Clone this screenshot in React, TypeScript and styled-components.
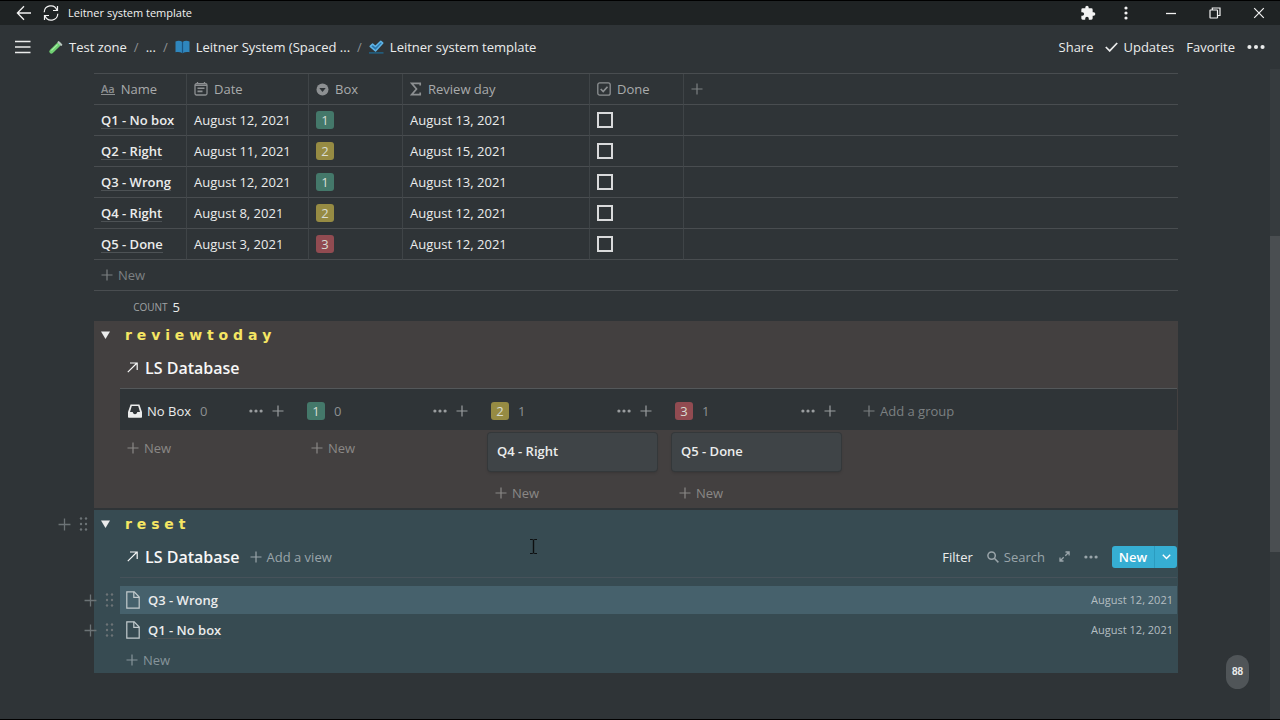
import React from "react";
import styled, { createGlobalStyle, css } from "styled-components";

const GlobalStyle = createGlobalStyle`
  *, *::before, *::after { box-sizing: border-box; }
  body {
    margin: 0;
    background: #2f3437;
    color: #ebecec;
    font-family: "Open Sans", "Noto Sans", sans-serif;
    font-size: 13px;
    line-height: 20px;
  }
  button {
    margin: 0;
    padding: 0;
    border: 0;
    background: none;
    color: inherit;
    font: inherit;
    cursor: pointer;
  }
  a { color: inherit; text-decoration: none; }
  svg { display: block; flex: none; }
`;

type Tone = "green" | "yellow" | "red";
const tones: Record<Tone, string> = {
  green: "#44786a",
  yellow: "#968b43",
  red: "#914b51",
};
const muted = "#8d9092";
const line = "#494d50";

/* ---------- Icons ---------- */

const PlusIcon = ({ size = 12 }: { size?: number }) => (
  <svg width={size} height={size} viewBox="0 0 12 12" fill="none" stroke="currentColor" strokeWidth="1.2">
    <path d="M6 0.5v11M0.5 6h11" />
  </svg>
);

const DotsIcon = ({ size = 14 }: { size?: number }) => (
  <svg width={size} height={size} viewBox="0 0 14 14" fill="currentColor">
    <circle cx="1.9" cy="7" r="1.6" />
    <circle cx="7" cy="7" r="1.6" />
    <circle cx="12.1" cy="7" r="1.6" />
  </svg>
);

const BackIcon = () => (
  <svg width="16" height="16" viewBox="0 0 16 16" fill="none" stroke="currentColor" strokeWidth="1.3">
    <path d="M15 8H1.5M8 1.2 1.4 8 8 14.8" />
  </svg>
);

const ReloadIcon = () => (
  <svg width="16" height="16" viewBox="0 0 16 16" fill="none" stroke="currentColor" strokeWidth="1.2">
    <path d="M1.2 7.2A6.6 6.6 0 0 1 14 5.2M14.8 8.8A6.6 6.6 0 0 1 2 10.8" />
    <path d="M14.5 1v4.5H10M1.5 15v-4.5H6" />
  </svg>
);

const PuzzleIcon = () => (
  <svg width="16" height="16" viewBox="0 0 24 24" fill="currentColor">
    <path d="M20.5 11H19V7a2 2 0 0 0-2-2h-4V3.5a2.5 2.5 0 0 0-5 0V5H4a2 2 0 0 0-2 2v3.8h1.5a2.7 2.7 0 0 1 0 5.4H2V20a2 2 0 0 0 2 2h3.8v-1.5a2.7 2.7 0 0 1 5.4 0V22H17a2 2 0 0 0 2-2v-4h1.5a2.5 2.5 0 0 0 0-5z" />
  </svg>
);

const KebabIcon = () => (
  <svg width="14" height="14" viewBox="0 0 14 14" fill="currentColor">
    <circle cx="7" cy="2" r="1.6" />
    <circle cx="7" cy="7" r="1.6" />
    <circle cx="7" cy="12" r="1.6" />
  </svg>
);

const MinimizeIcon = () => (
  <svg width="12" height="12" viewBox="0 0 12 12" stroke="currentColor" strokeWidth="1.3">
    <path d="M1 6.5h10" />
  </svg>
);

const RestoreIcon = () => (
  <svg width="12" height="12" viewBox="0 0 12 12" fill="none" stroke="currentColor" strokeWidth="1.2">
    <rect x="1" y="3" width="7.5" height="8" rx="0.5" />
    <path d="M3.3 3V1H11v7.5H8.5" />
  </svg>
);

const CloseIcon = () => (
  <svg width="12" height="12" viewBox="0 0 12 12" stroke="currentColor" strokeWidth="1.2">
    <path d="M1.2 1.2l9.6 9.6M10.8 1.2l-9.6 9.6" />
  </svg>
);

const MenuIcon = () => (
  <svg width="16" height="14" viewBox="0 0 16 14" stroke="currentColor" strokeWidth="1.3">
    <path d="M0 1.5h15.5M0 7h15.5M0 12.5h15.5" />
  </svg>
);

const TestTubeIcon = () => (
  <svg width="15" height="15" viewBox="0 0 15 15" strokeLinecap="round">
    <path d="M3.4 11.6l7.4-7.4" stroke="#6fcf72" strokeWidth="4.2" />
    <path d="M3.8 10.2l5.4-5.4" stroke="#a6eda4" strokeWidth="1.2" />
    <path d="M10.6 2.2l2.6 2.6" stroke="#b9c6c0" strokeWidth="2.2" />
  </svg>
);

const BookIcon = () => (
  <svg width="15" height="14" viewBox="0 0 15 14">
    <path d="M0.5 1.5C3 0.3 5.4 0.7 7.5 2c2.1-1.3 4.5-1.7 7-0.5v10.8c-2.4-.6-4.8-.4-7 1-2.2-1.4-4.6-1.6-7-1z" fill="#2f86bd" />
    <path d="M7.5 2v11" stroke="#1b5480" strokeWidth="1.2" />
  </svg>
);

const TickPageIcon = () => (
  <svg width="15" height="14" viewBox="0 0 15 14" fill="none">
    <path d="M1.2 6.4l2.4-2.3 2.8 2.4 5.4-5.2 2 1.8-7.3 7.8z" stroke="#5fb4e6" strokeWidth="1.5" fill="#2b77ad" strokeLinejoin="round" />
    <path d="M0 12.9h14.5" stroke="#1e6d99" strokeWidth="1.2" />
  </svg>
);

const CheckIcon = () => (
  <svg width="13" height="10" viewBox="0 0 13 10" fill="none" stroke="currentColor" strokeWidth="1.7">
    <path d="M0.8 5l3.9 3.9L12.2 1" />
  </svg>
);

const CalendarIcon = () => (
  <svg width="14" height="14" viewBox="0 0 14 14" fill="none" stroke="currentColor" strokeWidth="1.3">
    <rect x="1" y="1.7" width="12" height="11.3" rx="1.5" />
    <path d="M1 3.3h12M3.5 6.2h7M3.5 9.4h5" strokeWidth="1.6" />
    <path d="M3.5 0v2M10.5 0v2" />
  </svg>
);

const SelectIcon = () => (
  <svg width="13" height="13" viewBox="0 0 13 13">
    <circle cx="6.5" cy="6.5" r="6" fill="currentColor" />
    <path d="M3.3 5h6.4L6.5 9z" fill="#2f3437" />
  </svg>
);

const SigmaIcon = () => (
  <svg width="12" height="14" viewBox="0 0 12 14" fill="none" stroke="currentColor" strokeWidth="1.7">
    <path d="M10.2 3.6V1.3H1.6L6.5 7l-4.9 5.7h8.6v-2.3" />
  </svg>
);

const CheckboxIcon = () => (
  <svg width="14" height="14" viewBox="0 0 14 14" fill="none" stroke="currentColor">
    <rect x="0.8" y="0.8" width="12.4" height="12.4" rx="2" strokeWidth="1.3" />
    <path d="M3.7 7l2.5 2.5 4.3-4.7" strokeWidth="1.7" />
  </svg>
);

const ToggleIcon = () => (
  <svg width="9" height="8" viewBox="0 0 9 8" fill="currentColor">
    <path d="M0 0.5h9L4.5 8z" />
  </svg>
);

const ArrowOutIcon = () => (
  <svg width="11" height="11" viewBox="0 0 11 11" fill="none" stroke="currentColor" strokeWidth="1.2">
    <path d="M0.8 10.2L10 1M3 1h7.2v7" />
  </svg>
);

const InboxIcon = () => (
  <svg width="14" height="14" viewBox="0 0 14 14" fill="currentColor">
    <path fillRule="evenodd" d="M2.6 0.5h8.8L14 8v5a.8.8 0 0 1-.8.8H.8A.8.8 0 0 1 0 13V8zM3.8 2.1L2 8h2.8c0 1.3 1 2.2 2.2 2.2S9.2 9.3 9.2 8H12L10.2 2.1z" />
  </svg>
);

const SearchIcon = () => (
  <svg width="12" height="12" viewBox="0 0 12 12" fill="none" stroke="currentColor" strokeWidth="1.5">
    <circle cx="4.6" cy="4.6" r="3.7" />
    <path d="M7.3 7.3l4.1 4.1" />
  </svg>
);

const ExpandIcon = () => (
  <svg width="11" height="11" viewBox="0 0 11 11" fill="none" stroke="currentColor" strokeWidth="1.3">
    <path d="M6.5 1h3.6v3.6M10 1L6.3 4.7M4.5 10H1V6.4M1 10l3.7-3.7" />
  </svg>
);

const ChevronIcon = () => (
  <svg width="9" height="6" viewBox="0 0 9 6" fill="none" stroke="currentColor" strokeWidth="1.4">
    <path d="M0.8 0.8l3.7 3.8L8.2 0.8" />
  </svg>
);

const PageIcon = () => (
  <svg width="14" height="18" viewBox="0 0 14 18" fill="none" stroke="currentColor" strokeWidth="1.2">
    <path d="M0.8 0.8h7.4l5 5.2v11.2H0.8z" />
    <path d="M7.8 0.8v5.6h5.4" />
  </svg>
);

const GripIcon = () => (
  <svg width="9" height="14" viewBox="0 0 9 14" fill="currentColor">
    {[1.5, 7, 12.5].map((y) => (
      <React.Fragment key={y}>
        <circle cx="2" cy={y} r="1.2" />
        <circle cx="7" cy={y} r="1.2" />
      </React.Fragment>
    ))}
  </svg>
);

const BeamIcon = () => (
  <svg width="9" height="17" viewBox="0 0 9 17" fill="none" stroke="#0d0f10">
    <path d="M4.5 1.5v14" strokeWidth="1.4" />
    <path d="M1 1.5h2.8M5.200 1.500H8M1 15.500h2.800M5.200 15.500H8" strokeWidth="1.2" />
  </svg>
);

/* ---------- Frame ---------- */

const Shell = styled.div`
  display: flex;
  flex-direction: column;
  min-height: 100vh;
  position: relative;
  border-top: 1px solid #000;
  border-bottom: 1px solid #000;
`;

const TitleBar = styled.header`
  display: flex;
  align-items: center;
  height: 24px;
  padding: 0 15px 0 16px;
  gap: 11px;
  background: #1f2324;
  color: #f2f2f2;
  font-size: 11px;
`;

const WindowTitle = styled.span`
  flex: 1;
  margin-left: -2px;
`;

const WindowControls = styled.div`
  display: flex;
  align-items: center;
  gap: 32px;
`;

const AppControls = styled.div`
  display: flex;
  align-items: center;
  gap: 23px;
`;

const IconButton = styled.button<{ $color?: string }>`
  display: flex;
  align-items: center;
  justify-content: center;
  color: ${(p) => p.$color ?? "inherit"};
`;

const PageBar = styled.nav`
  display: flex;
  align-items: center;
  justify-content: space-between;
  height: 44px;
  padding: 0 15px;
  gap: 17px;
`;

const Crumbs = styled.div`
  display: flex;
  flex: 1;
  align-items: center;
  gap: 7px;
`;

const Crumb = styled.a`
  display: flex;
  align-items: center;
  gap: 6px;
`;

const Slash = styled.span`
  color: ${muted};
`;

const PageActions = styled.div`
  display: flex;
  align-items: center;
  gap: 12px;
`;

const ActionButton = styled.button`
  display: flex;
  align-items: center;
  gap: 5px;
`;

const Body = styled.div`
  display: flex;
  flex: 1;
`;

const Main = styled.main`
  flex: 1;
  min-width: 0;
  padding: 4px 92px 40px 94px;
`;

const ScrollTrack = styled.div`
  display: flex;
  flex-direction: column;
  width: 10px;
  background: #363b3e;
`;

const ScrollSpace = styled.div`
  flex: 168;
`;

const ScrollThumb = styled.div`
  flex: 316;
  background: #4a4e51;
`;

/* ---------- Table ---------- */

const Table = styled.table`
  width: 100%;
  table-layout: fixed;
  border-spacing: 0;
  border-top: 1px solid ${line};
`;

const Col = styled.col<{ $w?: number }>`
  width: ${(p) => (p.$w ? `${p.$w}px` : "auto")};
`;

const cell = css`
  height: 31px;
  padding: 0 7px;
  border-bottom: 1px solid ${line};
  border-right: 1px solid #3f4447;
  text-align: left;
  white-space: nowrap;
  &:last-child { border-right: 0; }
`;

const HeadCell = styled.th`
  ${cell}
  color: #a9abac;
  font-weight: 400;
`;

const Cell = styled.td`
  ${cell}
`;

const HeadLabel = styled.span`
  display: flex;
  align-items: center;
  gap: 6px;
  svg { color: ${muted}; }
`;

const AaMark = styled.span`
  color: ${muted};
  font-size: 11px;
  line-height: 11px;
  font-weight: 600;
  border-bottom: 1px solid ${muted};
`;

const PageLink = styled.a<{ $plain?: boolean }>`
  display: inline-block;
  line-height: 16px;
  font-weight: 600;
  border-bottom: 1px solid ${(p) => (p.$plain ? "transparent" : "#4d5255")};
`;

const Tag = styled.span<{ $tone: Tone }>`
  display: block;
  width: 18px;
  height: 18px;
  border-radius: 3px;
  background: ${(p) => tones[p.$tone]};
  color: #d8dcd4;
  line-height: 18px;
  text-align: center;
`;

const Tick = styled.input`
  appearance: none;
  display: block;
  width: 16px;
  height: 16px;
  margin: 0;
  border: 2px solid #d9dadb;
`;

const NewButton = styled.button<{ $color?: string }>`
  display: flex;
  align-items: center;
  gap: 5px;
  color: ${(p) => p.$color ?? "#7c8082"};
`;

const TableFoot = styled.div`
  display: flex;
  align-items: center;
  height: 31px;
  padding: 0 7px;
  border-bottom: 1px solid ${line};
`;

const CountRow = styled.div`
  display: flex;
  align-items: center;
  justify-content: flex-end;
  gap: 5px;
  width: 93px;
  height: 30px;
  padding: 2px 7px 0 0;
`;

const CountLabel = styled.span`
  color: #a0a3a4;
  font-size: 10px;
`;

/* ---------- Toggle sections ---------- */

const Section = styled.section<{ $bg: string }>`
  position: relative;
  padding: 2px 1px 0 26px;
  background: ${(p) => p.$bg};
  & + & { margin-top: 2px; }
`;

const ToggleRow = styled.button`
  display: flex;
  align-items: center;
  gap: 15px;
  height: 24px;
  margin-left: -19px;
`;

const ToggleText = styled.span`
  color: #f5e663;
  font-family: "DejaVu Sans", sans-serif;
  font-size: 14px;
  font-weight: 700;
`;

const ViewBar = styled.div`
  display: flex;
  align-items: center;
  justify-content: space-between;
  height: 41px;
`;

const ViewGroup = styled.div`
  display: flex;
  align-items: center;
  gap: 10px;
`;

const ViewTitle = styled.a`
  display: flex;
  align-items: center;
  gap: 7px;
  padding-left: 7px;
  color: #f7f7f7;
  font-size: 16px;
  font-weight: 600;
`;

const BoardHead = styled.div`
  display: flex;
  align-items: center;
  gap: 14px;
  height: 42px;
  padding-top: 3px;
  border-top: 1px solid #54585a;
  background: #2f3437;
`;

const Group = styled.div<{ $inset: number }>`
  display: flex;
  align-items: center;
  width: 170px;
  padding: 0 6px 0 ${(p) => p.$inset}px;
  gap: 9px;
`;

const GroupName = styled.span`
  display: flex;
  align-items: center;
  gap: 5px;
`;

const GroupCount = styled.span`
  flex: 1;
  color: ${muted};
`;

const BoardBody = styled.div`
  display: flex;
  align-items: flex-start;
  gap: 14px;
  padding-top: 3px;
`;

const Lane = styled.div`
  display: flex;
  flex-direction: column;
  align-items: flex-start;
  width: 170px;
  gap: 7px;
`;

const Card = styled.a`
  width: 169px;
  height: 38px;
  padding: 0 9px;
  border-radius: 3px;
  background: #3f4447;
  box-shadow: 0 0 0 1px #34383a, 0 2px 3px rgba(15, 15, 15, 0.2);
  font-weight: 600;
  line-height: 36px;
`;

const LaneNew = styled(NewButton)`
  height: 30px;
  padding-left: 7px;
`;

const Tools = styled.div`
  display: flex;
  align-items: center;
  gap: 14px;
  color: #9aa5aa;
`;

const ToolButton = styled.button<{ $strong?: boolean }>`
  display: flex;
  align-items: center;
  gap: 5px;
  ${(p) => p.$strong && css`color: #eceded;`}
`;

const SplitButton = styled.div`
  display: flex;
  height: 22px;
  border-radius: 3px;
  overflow: hidden;
  background: #36aed3;
  color: #fff;
`;

const SplitMain = styled.button`
  width: 43px;
  border-right: 1px solid #2b9cc0;
  font-weight: 600;
`;

const SplitMore = styled(IconButton)`
  width: 22px;
`;

const List = styled.div`
  display: flex;
  flex-direction: column;
  gap: 2px;
  padding-top: 8px;
  border-top: 1px solid #46525a;
`;

const ListRow = styled.div<{ $active?: boolean }>`
  position: relative;
  display: flex;
  align-items: center;
  gap: 8px;
  height: 28px;
  padding: 0 4px 0 6px;
  background: ${(p) => (p.$active ? "#46616c" : "transparent")};
  svg { color: #c3cbce; }
`;

const RowDate = styled.time`
  margin-left: auto;
  color: #b4bec2;
  font-size: 11px;
`;

const Gutter = styled.div`
  position: absolute;
  top: 0;
  right: 100%;
  display: flex;
  align-items: center;
  gap: 8px;
  height: 28px;
  padding-right: 6px;
  svg { color: #6c7376; }
`;

const ListFoot = styled.div`
  display: flex;
  align-items: center;
  height: 27px;
  padding: 0 6px;
`;

const HelpBadge = styled.button`
  position: absolute;
  right: 31px;
  bottom: 30px;
  width: 23px;
  height: 34px;
  border-radius: 12px;
  background: #505558;
  font-family: "Liberation Sans", sans-serif;
  font-size: 10px;
  font-weight: 700;
`;

const Pointer = styled.div`
  position: absolute;
  left: 529px;
  top: 537px;
  pointer-events: none;
`;

/* ---------- Data ---------- */

type Item = { name: string; date: string; box: number; tone: Tone; review: string };

const items: Item[] = [
  { name: "Q1 - No box", date: "August 12, 2021", box: 1, tone: "green", review: "August 13, 2021" },
  { name: "Q2 - Right", date: "August 11, 2021", box: 2, tone: "yellow", review: "August 15, 2021" },
  { name: "Q3 - Wrong", date: "August 12, 2021", box: 1, tone: "green", review: "August 13, 2021" },
  { name: "Q4 - Right", date: "August 8, 2021", box: 2, tone: "yellow", review: "August 12, 2021" },
  { name: "Q5 - Done", date: "August 3, 2021", box: 3, tone: "red", review: "August 12, 2021" },
];

const groups: { box?: number; tone?: Tone; cards: string[] }[] = [
  { cards: [] },
  { box: 1, tone: "green", cards: [] },
  { box: 2, tone: "yellow", cards: ["Q4 - Right"] },
  { box: 3, tone: "red", cards: ["Q5 - Done"] },
];

const resetRows = [
  { name: "Q3 - Wrong", date: "August 12, 2021", active: true },
  { name: "Q1 - No box", date: "August 12, 2021", active: false },
];

const Handles = () => (
  <Gutter>
    <IconButton aria-label="Add block"><PlusIcon size={13} /></IconButton>
    <IconButton aria-label="Drag block"><GripIcon /></IconButton>
  </Gutter>
);

const Database = () => (
  <>
    <Table>
      <colgroup>
        <Col $w={93} />
        <Col $w={122} />
        <Col $w={94} />
        <Col $w={187} />
        <Col $w={94} />
        <Col />
      </colgroup>
      <thead>
        <tr>
          <HeadCell><HeadLabel><AaMark>Aa</AaMark>Name</HeadLabel></HeadCell>
          <HeadCell><HeadLabel><CalendarIcon />Date</HeadLabel></HeadCell>
          <HeadCell><HeadLabel><SelectIcon />Box</HeadLabel></HeadCell>
          <HeadCell><HeadLabel><SigmaIcon />Review day</HeadLabel></HeadCell>
          <HeadCell><HeadLabel><CheckboxIcon />Done</HeadLabel></HeadCell>
          <HeadCell><IconButton aria-label="Add property" $color="#7c8082"><PlusIcon /></IconButton></HeadCell>
        </tr>
      </thead>
      <tbody>
        {items.map((item) => (
          <tr key={item.name}>
            <Cell><PageLink href="#">{item.name}</PageLink></Cell>
            <Cell>{item.date}</Cell>
            <Cell><Tag $tone={item.tone}>{item.box}</Tag></Cell>
            <Cell>{item.review}</Cell>
            <Cell><Tick type="checkbox" aria-label={`${item.name} done`} /></Cell>
            <Cell />
          </tr>
        ))}
      </tbody>
    </Table>
    <TableFoot><NewButton><PlusIcon />New</NewButton></TableFoot>
    <CountRow><CountLabel>COUNT</CountLabel>5</CountRow>
  </>
);

const ReviewToday = () => (
  <Section $bg="#434040">
    <ToggleRow><ToggleIcon /><ToggleText>r e v i e w t o d a y</ToggleText></ToggleRow>
    <ViewBar><ViewTitle href="#"><ArrowOutIcon />LS Database</ViewTitle></ViewBar>
    <div>
      <BoardHead>
        {groups.map((g, i) => (
          <Group key={i} $inset={g.tone ? 3 : 8}>
            {g.tone ? <Tag $tone={g.tone}>{g.box}</Tag> : <GroupName><InboxIcon />No Box</GroupName>}
            <GroupCount>{g.cards.length}</GroupCount>
            <IconButton aria-label="Group options" $color="#9a9d9f"><DotsIcon /></IconButton>
            <IconButton aria-label="Add card" $color="#9a9d9f"><PlusIcon /></IconButton>
          </Group>
        ))}
        <LaneNew><PlusIcon />Add a group</LaneNew>
      </BoardHead>
      <BoardBody>
        {groups.map((g, i) => (
          <Lane key={i}>
            {g.cards.map((c) => <Card key={c} href="#">{c}</Card>)}
            <LaneNew $color="#8a8886"><PlusIcon />New</LaneNew>
          </Lane>
        ))}
      </BoardBody>
    </div>
  </Section>
);

const Reset = () => (
  <Section $bg="#374b52">
    <Handles />
    <ToggleRow><ToggleIcon /><ToggleText>r e s e t</ToggleText></ToggleRow>
    <ViewBar>
      <ViewGroup>
        <ViewTitle href="#"><ArrowOutIcon />LS Database</ViewTitle>
        <NewButton $color="#9aa5aa"><PlusIcon />Add a view</NewButton>
      </ViewGroup>
      <Tools>
        <ToolButton $strong>Filter</ToolButton>
        <ToolButton><SearchIcon />Search</ToolButton>
        <ToolButton aria-label="Open full page"><ExpandIcon /></ToolButton>
        <ToolButton aria-label="View options"><DotsIcon /></ToolButton>
        <SplitButton>
          <SplitMain>New</SplitMain>
          <SplitMore aria-label="New options"><ChevronIcon /></SplitMore>
        </SplitButton>
      </Tools>
    </ViewBar>
    <List>
      {resetRows.map((r) => (
        <ListRow key={r.name} $active={r.active}>
          <Handles />
          <PageIcon />
          <PageLink href="#" $plain={r.active}>{r.name}</PageLink>
          <RowDate>{r.date}</RowDate>
        </ListRow>
      ))}
      <ListFoot><NewButton $color="#86949a"><PlusIcon />New</NewButton></ListFoot>
    </List>
  </Section>
);

export default function App() {
  return (
    <>
      <GlobalStyle />
      <Shell>
        <TitleBar>
          <IconButton aria-label="Back"><BackIcon /></IconButton>
          <IconButton aria-label="Reload"><ReloadIcon /></IconButton>
          <WindowTitle>Leitner system template</WindowTitle>
          <WindowControls>
            <AppControls>
              <IconButton aria-label="Extensions"><PuzzleIcon /></IconButton>
              <IconButton aria-label="App menu"><KebabIcon /></IconButton>
            </AppControls>
            <IconButton aria-label="Minimize"><MinimizeIcon /></IconButton>
            <IconButton aria-label="Restore"><RestoreIcon /></IconButton>
            <IconButton aria-label="Close"><CloseIcon /></IconButton>
          </WindowControls>
        </TitleBar>
        <PageBar>
          <IconButton aria-label="Open sidebar"><MenuIcon /></IconButton>
          <Crumbs>
            <Crumb href="#"><TestTubeIcon />Test zone</Crumb>
            <Slash>/</Slash>
            <Crumb href="#">...</Crumb>
            <Slash>/</Slash>
            <Crumb href="#"><BookIcon />Leitner System (Spaced ...</Crumb>
            <Slash>/</Slash>
            <Crumb href="#"><TickPageIcon />Leitner system template</Crumb>
          </Crumbs>
          <PageActions>
            <ActionButton>Share</ActionButton>
            <ActionButton><CheckIcon />Updates</ActionButton>
            <ActionButton>Favorite</ActionButton>
            <IconButton aria-label="More"><DotsIcon size={18} /></IconButton>
          </PageActions>
        </PageBar>
        <Body>
          <Main>
            <Database />
            <ReviewToday />
            <Reset />
          </Main>
          <ScrollTrack>
            <ScrollSpace />
            <ScrollThumb />
            <ScrollSpace />
          </ScrollTrack>
        </Body>
        <HelpBadge aria-label="Help">88</HelpBadge>
        <Pointer><BeamIcon /></Pointer>
      </Shell>
    </>
  );
}
